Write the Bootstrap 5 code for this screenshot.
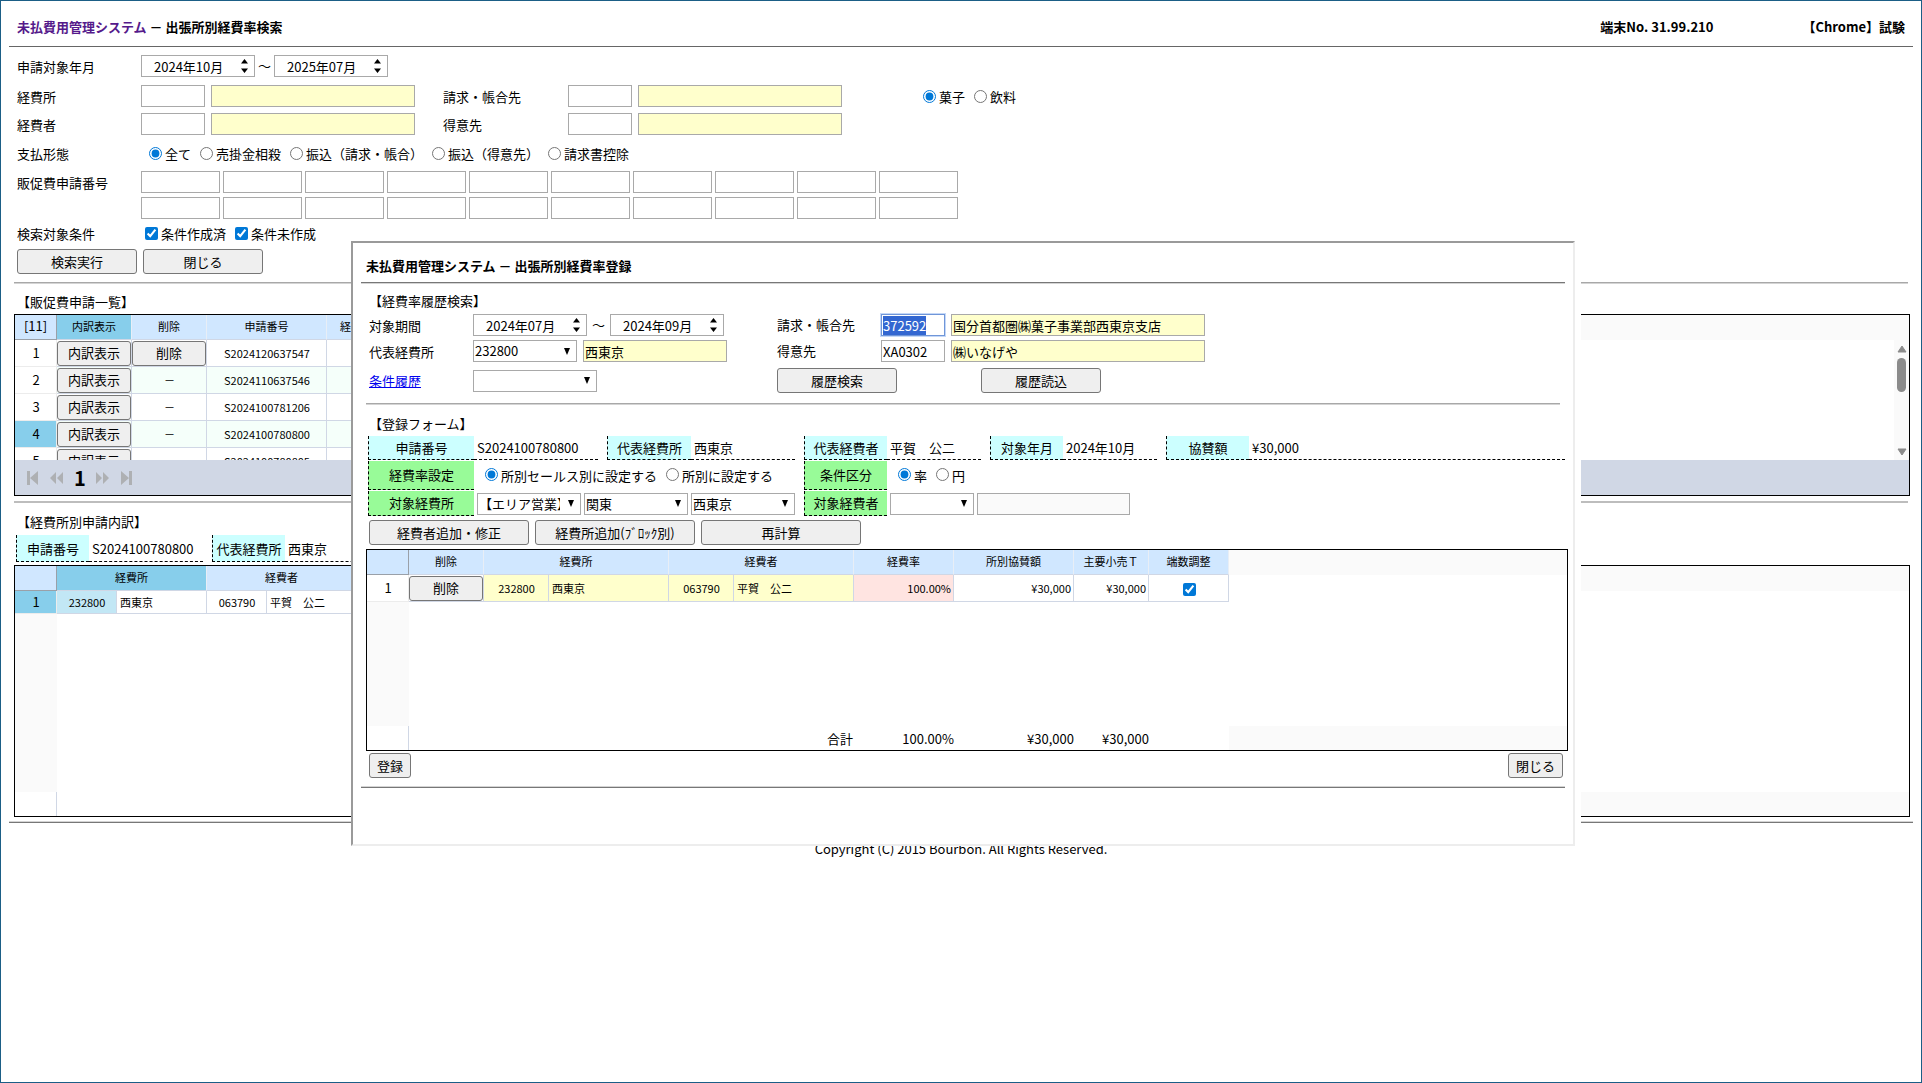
<!DOCTYPE html>
<html lang="ja">
<head>
<meta charset="utf-8">
<meta name="viewport" content="width=device-width, initial-scale=1">
<title>未払費用管理システム</title>
<link rel="stylesheet" href="https://cdn.jsdelivr.net/npm/bootstrap@5.3.0/dist/css/bootstrap.min.css">
<style>
  body { font: 13px/20px "Noto Sans CJK JP", sans-serif; color: #000; background: #fff; border: 1px solid #1b5e86; }
  h1, h2 { font-size: 13px; line-height: 20px; margin: 0; }
  h2 { font-weight: 400; }
  .title-link { color: #551a8b; }
  .page-head { height: 45px; padding: 6px 8px 0; margin: 0 8px; }
  .term-no { margin-right: 89px; }
  .head-rule { border-top: 1px solid #666; }
  .rule { height: 2px; border-top: 1px solid #a8a8a8; border-bottom: 1px solid #d4d4d4; }
  .rule-flat { border-color: #bdbdbd; }
  .rule-dark { border-top-color: #777; }
  .rule-end { border-top-color: #d4d4d4; border-bottom-color: #777; }

  /* controls */
  .ctl { height: 22px; border: 1px solid #a9a9a9; border-radius: 0; background: #fff; padding: 0 1px; color: #000; font: 13px/20px "Noto Sans CJK JP", sans-serif; }
  .ctl-code { width: 64px; margin-right: 6px; }
  .ctl-name { width: 204px; }
  .ctl-no { width: 79px; }
  .ctl-wide { width: 254px; }
  .ctl-mid { width: 144px; }
  .ctl-person { width: 153px; }
  .ctl-ro { background: #ffffcc; }
  .ctl-off { background: #fafafa; }
  .ctl-active:focus { border-color: #7096d8; outline: 1px solid #c4d8f8; }
  .ctl-active::selection { background: #3367d1; color: #fff; }
  select.ctl { appearance: none; width: 104px; padding-right: 20px; background: #fff url("data:image/svg+xml,%3Csvg xmlns='http://www.w3.org/2000/svg' width='6' height='7'%3E%3Cpath d='M0 0h6L3 7z'/%3E%3C/svg%3E") no-repeat right 6px center; }
  select.sel-long { width: 124px; }
  select.sel-short { width: 84px; }
  .month { width: 114px; padding: 0 6px 0 12px; }
  .month input { border: 0; padding: 1px 0 0; width: 80px; height: 20px; outline: 0; font: inherit; }
  .cap { width: 124px; padding-top: 1px; }
  .cap2 { width: 125px; margin-left: 28px; padding-top: 1px; }
  .mcap { width: 104px; padding-top: 1px; }
  .pick { display: inline-flex; align-items: center; margin-left: 9px; }
  .pick input { width: 13px; height: 13px; margin: 0 3px 2px 0; accent-color: #0078d7; }
  .box13 { width: 13px; height: 13px; accent-color: #0078d7; margin-bottom: 1px; }
  .pushbtn { height: 25px; padding: 0 6px; border: 1px solid #767676; border-radius: 3px; background: #efefef; color: #000; font: 13px/20px "Noto Sans CJK JP", sans-serif; }
  .w120 { width: 120px; }
  .w160 { width: 160px; }
  .endbtn { padding: 0 7px; white-space: nowrap; }

  /* dashed captions */
  .tag { border-left: 1px dashed #000; border-bottom: 1px dashed #000; background: #ccffff; text-align: center; line-height: 23px; }
  .tag-green { background: #98fb98; }
  .tagval { border-bottom: 1px dashed #000; padding-left: 3px; line-height: 23px; white-space: nowrap; }
  .tagrow > div > div { padding-top: 2px; }
  .t106 { width: 106px; } .t84 { width: 84px; } .t83 { width: 83px; } .t73 { width: 73px; }
  .v124 { width: 124px; } .v104 { width: 104px; } .v94 { width: 94px; } .v114 { width: 114px; }
  .v330 { width: 330px; }

  /* grids */
  .sheet { border: 1px solid #000; }
  .sheet table { table-layout: fixed; width: 0; border-collapse: separate; border-spacing: 0; }
  .sheet th { height: 25px; padding: 0 0 2px; background: #d0e7ff; font-size: 11px; font-weight: 400; text-align: center; line-height: 16px; border-right: 1px solid #e8eef6; border-bottom: 1px solid #d0d7e5; white-space: nowrap; }
  .sheet th.corner { font-size: 13px; border-right-color: #9aa0a8; border-bottom-color: #9aa0a8; }
  .sheet td { height: 27px; padding: 0 2px 0 3px; font-size: 11px; line-height: 16px; border-right: 1px solid #d0d7e5; border-bottom: 1px solid #d0d7e5; white-space: nowrap; }
  .sheet td.num { font-size: 13px; text-align: center; border-color: #ececec; }
  .sheet td.btncell { padding: 0; }
  .sheet td.btncell .pushbtn { width: 74px; display: block; }
  .sheet .on { background: #87ceeb; }
  .sheet .soft { background: #c2e7f5; }
  .sheet .yel { background: #ffffcc; }
  .sheet .pink { background: #ffe4e1; }
  .even td { background: #f5fffa; }
  .even td.num { background: #fff; }
  .even td.on { background: #87ceeb; }
  .short td { height: 23px; }
  .grey { background: #fafafa; }
  .side { width: 42px; }
  .foot-side { width: 42px; height: 24px; border-right: 1px solid #d0d7e5; }
  .list-body { height: 120px; overflow: hidden; }
  .bar { width: 15px; padding: 5px 0 4px; background: #fafafa; }
  .bar i { width: 9px; height: 34px; border-radius: 5px; background: #8b8b8b; margin-top: 5px; }
  .pager { height: 35px; background: #d0d7e5; padding-left: 12px; gap: 12px; }
  .pager button { border: 0; background: none; padding: 0; line-height: 0; }
  .pager b { font-size: 20px; width: 11px; margin: 0 -1px; }
  .detail-fill { height: 178px; }
  .form-fill { height: 124px; }
  .form-foot span { text-align: right; line-height: 25px; height: 24px; }

  .frame-wrap { top: 240px; left: 350px; right: 340px; background: #fff; padding-right: 6px; }
  .frame { border: 2px solid; border-color: #9a9a9a #ededed #ededed #9a9a9a; padding-bottom: 56px; }
</style>
<script src="https://cdn.jsdelivr.net/npm/bootstrap@5.3.0/dist/js/bootstrap.bundle.min.js"></script>
</head>
<body class="min-vh-100 position-relative">

<header class="page-head d-flex align-items-center fw-bold">
  <h1 class="fw-bold me-auto"><a href="#" class="title-link text-decoration-none">未払費用管理システム</a> － 出張所別経費率検索</h1>
  <span class="term-no">端末No. 31.99.210</span>
  <span>【Chrome】試験</span>
</header>
<div class="head-rule mx-2"></div>

<form class="px-3 pt-2" onsubmit="return false">
  <div class="d-flex align-items-center mb-2">
    <label class="cap" for="m1">申請対象年月</label>
    <div class="ctl month d-flex align-items-center justify-content-between"><input id="m1" value="2024年10月"><svg width="7" height="14" viewBox="0 0 7 14"><path d="M0 4.500 3.500 0 7 4.500zM0 9.500h7L3.500 14z"/></svg></div>
    <span class="text-center" style="width:19px">～</span>
    <div class="ctl month d-flex align-items-center justify-content-between"><input aria-label="申請対象年月 終了" value="2025年07月"><svg width="7" height="14" viewBox="0 0 7 14"><path d="M0 4.500 3.500 0 7 4.500zM0 9.500h7L3.500 14z"/></svg></div>
  </div>
  <div class="d-flex align-items-center" style="margin-bottom:6px">
    <label class="cap" for="c1">経費所</label><input id="c1" class="ctl ctl-code"><input class="ctl ctl-name ctl-ro" aria-label="経費所名" readonly>
    <label class="cap2" for="c2">請求・帳合先</label><input id="c2" class="ctl ctl-code"><input class="ctl ctl-name ctl-ro" aria-label="請求・帳合先名" readonly>
    <div class="d-flex" style="margin-left:72px;padding-top:2px"><label class="pick"><input type="radio" name="kind" checked>菓子</label><label class="pick"><input type="radio" name="kind">飲料</label></div>
  </div>
  <div class="d-flex align-items-center">
    <label class="cap" for="c3">経費者</label><input id="c3" class="ctl ctl-code"><input class="ctl ctl-name ctl-ro" aria-label="経費者名" readonly>
    <label class="cap2" for="c4">得意先</label><input id="c4" class="ctl ctl-code"><input class="ctl ctl-name ctl-ro" aria-label="得意先名" readonly>
  </div>
  <div class="d-flex align-items-center" style="height:36px;padding-top:2px">
    <span style="width:123px">支払形態</span>
    <label class="pick"><input type="radio" name="pay" checked>全て</label><label class="pick"><input type="radio" name="pay">売掛金相殺</label><label class="pick"><input type="radio" name="pay">振込（請求・帳合）</label><label class="pick"><input type="radio" name="pay">振込（得意先）</label><label class="pick"><input type="radio" name="pay">請求書控除</label>
  </div>
  <div class="d-flex align-items-center mb-1">
    <span class="cap">販促費申請番号</span>
    <div class="d-flex" style="gap:3px">
      <input class="ctl ctl-no" aria-label="番号1"><input class="ctl ctl-no" aria-label="番号2"><input class="ctl ctl-no" aria-label="番号3"><input class="ctl ctl-no" aria-label="番号4"><input class="ctl ctl-no" aria-label="番号5"><input class="ctl ctl-no" aria-label="番号6"><input class="ctl ctl-no" aria-label="番号7"><input class="ctl ctl-no" aria-label="番号8"><input class="ctl ctl-no" aria-label="番号9"><input class="ctl ctl-no" aria-label="番号10">
    </div>
  </div>
  <div class="d-flex">
    <span class="cap"></span>
    <div class="d-flex" style="gap:3px">
      <input class="ctl ctl-no" aria-label="番号11"><input class="ctl ctl-no" aria-label="番号12"><input class="ctl ctl-no" aria-label="番号13"><input class="ctl ctl-no" aria-label="番号14"><input class="ctl ctl-no" aria-label="番号15"><input class="ctl ctl-no" aria-label="番号16"><input class="ctl ctl-no" aria-label="番号17"><input class="ctl ctl-no" aria-label="番号18"><input class="ctl ctl-no" aria-label="番号19"><input class="ctl ctl-no" aria-label="番号20">
    </div>
  </div>
  <div class="d-flex align-items-center" style="height:30px">
    <span style="width:119px">検索対象条件</span>
    <label class="pick"><input type="checkbox" checked>条件作成済</label><label class="pick"><input type="checkbox" checked>条件未作成</label>
  </div>
  <div class="d-flex mb-2" style="gap:6px"><button class="pushbtn w120">検索実行</button><button class="pushbtn w120">閉じる</button></div>
</form>

<main style="margin:0 11px 0 13px">
  <div class="rule" style="margin-right:2px"></div>
  <h2 style="padding:8px 0 2px 3px">【販促費申請一覧】</h2>
  <div class="sheet">
    <div class="grey">
      <table>
        <colgroup><col style="width:42px"><col style="width:75px"><col style="width:75px"><col style="width:120px"><col style="width:60px"></colgroup>
        <thead><tr><th class="corner">[11]</th><th class="on">内訳表示</th><th>削除</th><th>申請番号</th><th>経費所</th></tr></thead>
      </table>
    </div>
    <div class="list-body d-flex justify-content-between">
      <table>
        <colgroup><col style="width:42px"><col style="width:75px"><col style="width:75px"><col style="width:120px"><col style="width:60px"></colgroup>
        <tbody class="text-center">
          <tr><td class="num">1</td><td class="btncell"><button class="pushbtn">内訳表示</button></td><td class="btncell"><button class="pushbtn">削除</button></td><td>S2024120637547</td><td></td></tr>
          <tr class="even"><td class="num">2</td><td class="btncell"><button class="pushbtn">内訳表示</button></td><td>－</td><td>S2024110637546</td><td></td></tr>
          <tr><td class="num">3</td><td class="btncell"><button class="pushbtn">内訳表示</button></td><td>－</td><td>S2024100781206</td><td></td></tr>
          <tr class="even"><td class="num on">4</td><td class="btncell"><button class="pushbtn">内訳表示</button></td><td>－</td><td>S2024100780800</td><td></td></tr>
          <tr><td class="num">5</td><td class="btncell"><button class="pushbtn">内訳表示</button></td><td></td><td>S2024100780805</td><td></td></tr>
        </tbody>
      </table>
      <div class="bar d-flex flex-column align-items-center">
        <svg width="10" height="8" viewBox="0 0 10 8"><path fill="#8b8b8b" stroke="#8b8b8b" stroke-linejoin="round" d="M5 1 9 7H1z"/></svg>
        <i></i>
        <svg class="mt-auto" width="10" height="8" viewBox="0 0 10 8"><path fill="#8b8b8b" stroke="#8b8b8b" stroke-linejoin="round" d="M5 7 9 1H1z"/></svg>
      </div>
    </div>
    <nav class="pager d-flex align-items-center" aria-label="ページ">
      <button aria-label="先頭"><svg width="11" height="14" viewBox="0 0 11 14"><path fill="#aeb0b3" d="M0 0h3v14H0zM11 0v14L3 7z"/></svg></button>
      <button aria-label="前"><svg width="13" height="12" viewBox="0 0 13 12"><path fill="#aeb0b3" d="M6 0v12L0 6zM13 0v12L7 6z"/></svg></button>
      <b>1</b>
      <button aria-label="次"><svg width="13" height="12" viewBox="0 0 13 12"><path fill="#aeb0b3" d="M0 0v12l6-6zM7 0v12l6-6z"/></svg></button>
      <button aria-label="最後"><svg width="11" height="14" viewBox="0 0 11 14"><path fill="#aeb0b3" d="M8 0h3v14H8zM0 0v14l8-7z"/></svg></button>
    </nav>
  </div>
  <div class="rule rule-flat" style="margin:5px 2px 0 0"></div>
  <h2 style="padding:9px 0 3px 3px">【経費所別申請内訳】</h2>
  <div class="d-flex tagrow" style="height:27px;margin:0 0 3px 2px;gap:9px">
    <div class="d-flex"><div class="tag t73">申請番号</div><div class="tagval v114">S2024100780800</div></div>
    <div class="d-flex"><div class="tag t73">代表経費所</div><div class="tagval v114">西東京</div></div>
  </div>
  <div class="sheet">
    <div class="grey">
      <table>
        <colgroup><col style="width:42px"><col style="width:60px"><col style="width:90px"><col style="width:60px"><col style="width:90px"></colgroup>
        <thead><tr><th class="corner"></th><th class="on" colspan="2">経費所</th><th colspan="2">経費者</th></tr></thead>
      </table>
    </div>
    <table class="short">
      <colgroup><col style="width:42px"><col style="width:60px"><col style="width:90px"><col style="width:60px"><col style="width:90px"></colgroup>
      <tbody><tr><td class="num on">1</td><td class="soft text-center">232800</td><td>西東京</td><td class="text-center">063790</td><td>平賀　公二</td></tr></tbody>
    </table>
    <div class="detail-fill side grey"></div>
    <div class="d-flex"><div class="foot-side"></div><div style="width:1200px"></div><div class="flex-fill grey"></div></div>
  </div>
</main>
<footer>
  <div class="rule rule-end mx-2" style="margin-top:4px"></div>
  <p class="text-center mb-0" style="padding-top:16px">Copyright (C) 2015 Bourbon. All Rights Reserved.</p>
</footer>

<section class="frame-wrap position-absolute" aria-label="出張所別経費率登録">
 <div class="frame">
  <h1 class="fw-bold" style="padding:13px 13px 6px">未払費用管理システム － 出張所別経費率登録</h1>
  <div class="rule rule-dark mx-2"></div>
  <h2 style="padding:7px 16px 3px">【経費率履歴検索】</h2>
  <form class="px-3" onsubmit="return false">
    <div class="d-flex mb-1">
      <div class="d-flex align-items-center" style="width:408px">
        <label class="mcap" for="p1">対象期間</label>
        <div class="ctl month d-flex align-items-center justify-content-between"><input id="p1" value="2024年07月"><svg width="7" height="14" viewBox="0 0 7 14"><path d="M0 4.500 3.500 0 7 4.500zM0 9.500h7L3.500 14z"/></svg></div>
        <span class="text-center" style="width:23px">～</span>
        <div class="ctl month d-flex align-items-center justify-content-between"><input aria-label="対象期間 終了" value="2024年09月"><svg width="7" height="14" viewBox="0 0 7 14"><path d="M0 4.500 3.500 0 7 4.500zM0 9.500h7L3.500 14z"/></svg></div>
      </div>
      <label class="mcap" for="q1">請求・帳合先</label><input id="q1" class="ctl ctl-code ctl-active" value="372592" autofocus><input class="ctl ctl-wide ctl-ro" aria-label="請求・帳合先名" value="国分首都圏㈱菓子事業部西東京支店" readonly>
    </div>
    <div class="d-flex">
      <div class="d-flex align-items-center" style="width:408px">
        <label class="mcap" for="p2">代表経費所</label>
        <select id="p2" class="ctl" style="margin-right:6px"><option>232800</option></select><input class="ctl ctl-mid ctl-ro" aria-label="代表経費所名" value="西東京" readonly>
      </div>
      <label class="mcap" for="q2">得意先</label><input id="q2" class="ctl ctl-code" value="XA0302"><input class="ctl ctl-wide ctl-ro" aria-label="得意先名" value="㈱いなげや" readonly>
    </div>
    <div class="d-flex align-items-center" style="margin:6px 0 10px">
      <a href="#" class="mcap" style="color:#00e">条件履歴</a>
      <select class="ctl sel-long" aria-label="条件履歴" style="margin-right:180px"><option></option></select>
      <button class="pushbtn w120" style="margin-right:84px">履歴検索</button><button class="pushbtn w120">履歴読込</button>
    </div>
  </form>
  <div class="rule" style="margin:0 13px"></div>
  <h2 style="padding:9px 16px 2px">【登録フォーム】</h2>
  <form style="margin:0 8px 0 15px" onsubmit="return false">
    <div class="d-flex" style="gap:9px;height:24px;margin-bottom:1px">
      <div class="d-flex"><div class="tag t106">申請番号</div><div class="tagval v124">S2024100780800</div></div>
      <div class="d-flex"><div class="tag t84">代表経費所</div><div class="tagval v104">西東京</div></div>
      <div class="d-flex"><div class="tag t83">代表経費者</div><div class="tagval v94">平賀　公二</div></div>
      <div class="d-flex"><div class="tag t73">対象年月</div><div class="tagval v94">2024年10月</div></div>
      <div class="d-flex flex-fill"><div class="tag t83">協賛額</div><div class="tagval flex-fill">¥30,000</div></div>
    </div>
    <div class="d-flex align-items-center" style="margin-bottom:1px">
      <div class="tag tag-green t106" style="line-height:28px">経費率設定</div>
      <div class="v330" style="padding:1px 0 0 2px"><label class="pick"><input type="radio" name="rate" checked>所別セールス別に設定する</label><label class="pick"><input type="radio" name="rate">所別に設定する</label></div>
      <div class="tag tag-green t83" style="line-height:28px">条件区分</div>
      <div style="padding:1px 0 0 2px"><label class="pick"><input type="radio" name="unit" checked>率</label><label class="pick"><input type="radio" name="unit">円</label></div>
    </div>
    <div class="d-flex align-items-center" style="height:25px">
      <div class="tag tag-green t106 h-100">対象経費所</div>
      <div class="v330 d-flex" style="padding-left:3px;gap:3px">
        <select class="ctl" aria-label="エリア"><option>【エリア営業】</option></select><select class="ctl" aria-label="地域"><option>関東</option></select><select class="ctl" aria-label="経費所"><option>西東京</option></select>
      </div>
      <div class="tag tag-green t83 h-100">対象経費者</div>
      <div class="d-flex" style="padding-left:3px;gap:3px"><select class="ctl sel-short" aria-label="対象経費者"><option></option></select><input class="ctl ctl-person ctl-off" aria-label="対象経費者名" disabled></div>
    </div>
    <div class="d-flex" style="gap:6px;margin:4px 0 4px 1px"><button class="pushbtn w160">経費者追加・修正</button><button class="pushbtn w160">経費所追加(ﾌﾞﾛｯｸ別)</button><button class="pushbtn w160">再計算</button></div>
  </form>
  <div class="sheet" style="margin:0 5px 0 13px">
    <div class="grey">
      <table>
        <colgroup><col style="width:42px"><col style="width:75px"><col style="width:185px"><col style="width:185px"><col style="width:100px"><col style="width:120px"><col style="width:75px"><col style="width:80px"></colgroup>
        <thead><tr><th class="corner"></th><th>削除</th><th>経費所</th><th>経費者</th><th>経費率</th><th>所別協賛額</th><th>主要小売Ｔ</th><th>端数調整</th></tr></thead>
      </table>
    </div>
    <table>
      <colgroup><col style="width:42px"><col style="width:75px"><col style="width:65px"><col style="width:120px"><col style="width:65px"><col style="width:120px"><col style="width:100px"><col style="width:120px"><col style="width:75px"><col style="width:80px"></colgroup>
      <tbody><tr><td class="num">1</td><td class="btncell"><button class="pushbtn">削除</button></td><td class="yel text-center">232800</td><td class="yel">西東京</td><td class="yel text-center">063790</td><td class="yel">平賀　公二</td><td class="pink text-end">100.00%</td><td class="text-end">¥30,000</td><td class="text-end">¥30,000</td><td class="text-center"><input type="checkbox" class="box13 align-middle" aria-label="端数調整" checked></td></tr></tbody>
    </table>
    <div class="form-fill side grey"></div>
    <div class="d-flex form-foot"><div class="foot-side"></div><span style="width:444px">合計</span><span style="width:101px">100.00%</span><span style="width:120px">¥30,000</span><span style="width:75px">¥30,000</span><span style="width:80px"></span><div class="flex-fill grey"></div></div>
  </div>
  <div class="d-flex justify-content-between" style="margin:2px 10px 8px 16px"><button class="pushbtn endbtn">登録</button><button class="pushbtn endbtn">閉じる</button></div>
  <div class="rule rule-end mx-2"></div>
 </div>
</section>
<script>
  const code = document.getElementById('q1');
  code.focus({ preventScroll: true });
  code.select();
</script>
</body>
</html>
